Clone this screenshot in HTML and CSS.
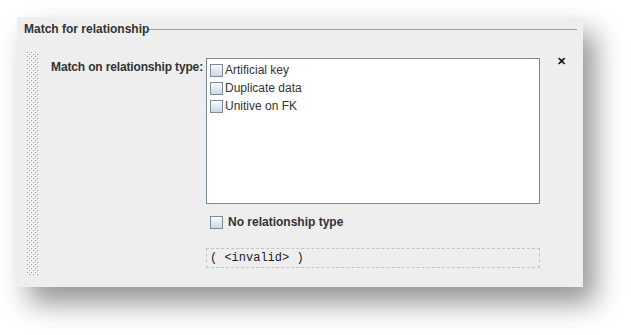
FILE: index.html
```html
<!DOCTYPE html>
<html lang="en">
<head>
  <meta charset="UTF-8">
  <title>Match for relationship</title>
  <link rel="stylesheet" href="styles.css">
</head>
<body>

<div class="panel">
  <div class="titlebar">
    <span class="title">Match for relationship</span>
    <span class="rule"></span>
  </div>

  <div class="main">
    <svg class="grip" width="12" height="223">
      <defs>
        <pattern id="dots" width="4" height="4" patternUnits="userSpaceOnUse">
          <rect x="0" y="0" width="1" height="1" fill="#9a9a9a"/>
          <rect x="1" y="1" width="1" height="1" fill="#ffffff"/>
          <rect x="2" y="2" width="1" height="1" fill="#9a9a9a"/>
          <rect x="3" y="3" width="1" height="1" fill="#ffffff"/>
        </pattern>
      </defs>
      <rect width="12" height="223" fill="url(#dots)"/>
    </svg>

    <div class="label">Match on relationship type:</div>

    <div class="content">
      <div class="list">
        <div class="row"><span class="box"></span>Artificial key</div>
        <div class="row"><span class="box"></span>Duplicate data</div>
        <div class="row"><span class="box"></span>Unitive on FK</div>
      </div>

      <div class="row none"><span class="box"></span>No relationship type</div>

      <div class="expr">( &lt;invalid&gt; )</div>
    </div>

    <div class="close">&#x2715;</div>
  </div>
</div>

</body>
</html>
```

FILE: styles.css
```css
html, body { min-height: 335px; }
body { margin: 0; background: #fff; font-family: "Liberation Sans", Arial, sans-serif; font-size: 12px; color: #333; }

.panel {
  margin: 17px 0 0 17px;
  width: 566px;
  height: 270px;
  background: #eeeeee;
  box-shadow: 12px 16px 26px rgba(0, 0, 0, 0.42);
}

.titlebar {
  display: flex;
  align-items: center;
  padding: 4px 6px 0 7px;
  height: 15px;
}
.title { font-weight: bold; }
.rule { flex: 1; height: 0; border-top: 1px solid #a0a0a0; margin-top: 1px; }

.main { display: flex; margin-top: 16px; }

.grip { display: block; margin-left: 10px; flex: none; }

.label {
  width: 153px;
  margin-left: 11px;
  padding-right: 3px;
  padding-top: 8px;
  text-align: right;
  font-weight: bold;
  white-space: nowrap;
  letter-spacing: -0.15px;
}

.content { width: 334px; margin-top: 6px; }

.list {
  height: 142px;
  background: #fff;
  border: 1px solid #7a8a99;
  padding: 2px 3px 0;
}

.row { display: flex; align-items: center; height: 18px; }
.box {
  width: 11px;
  height: 11px;
  margin-right: 2px;
  border: 1px solid #7a8a99;
  background: linear-gradient(#f8fbfe, #c9d8e7);
}

.none { margin: 9px 0 0 4px; font-weight: bold; }
.none .box { margin-right: 5px; }

.expr {
  margin-top: 17px;
  height: 18px;
  border: 1px dashed #c4c4c4;
  padding-left: 3px;
  line-height: 18px;
  font-family: "Liberation Mono", "Courier New", monospace;
  font-size: 12px;
  color: #222;
}

.close { margin-left: 17px; margin-top: 3px; font-size: 11px; font-weight: bold; color: #111; }
```
